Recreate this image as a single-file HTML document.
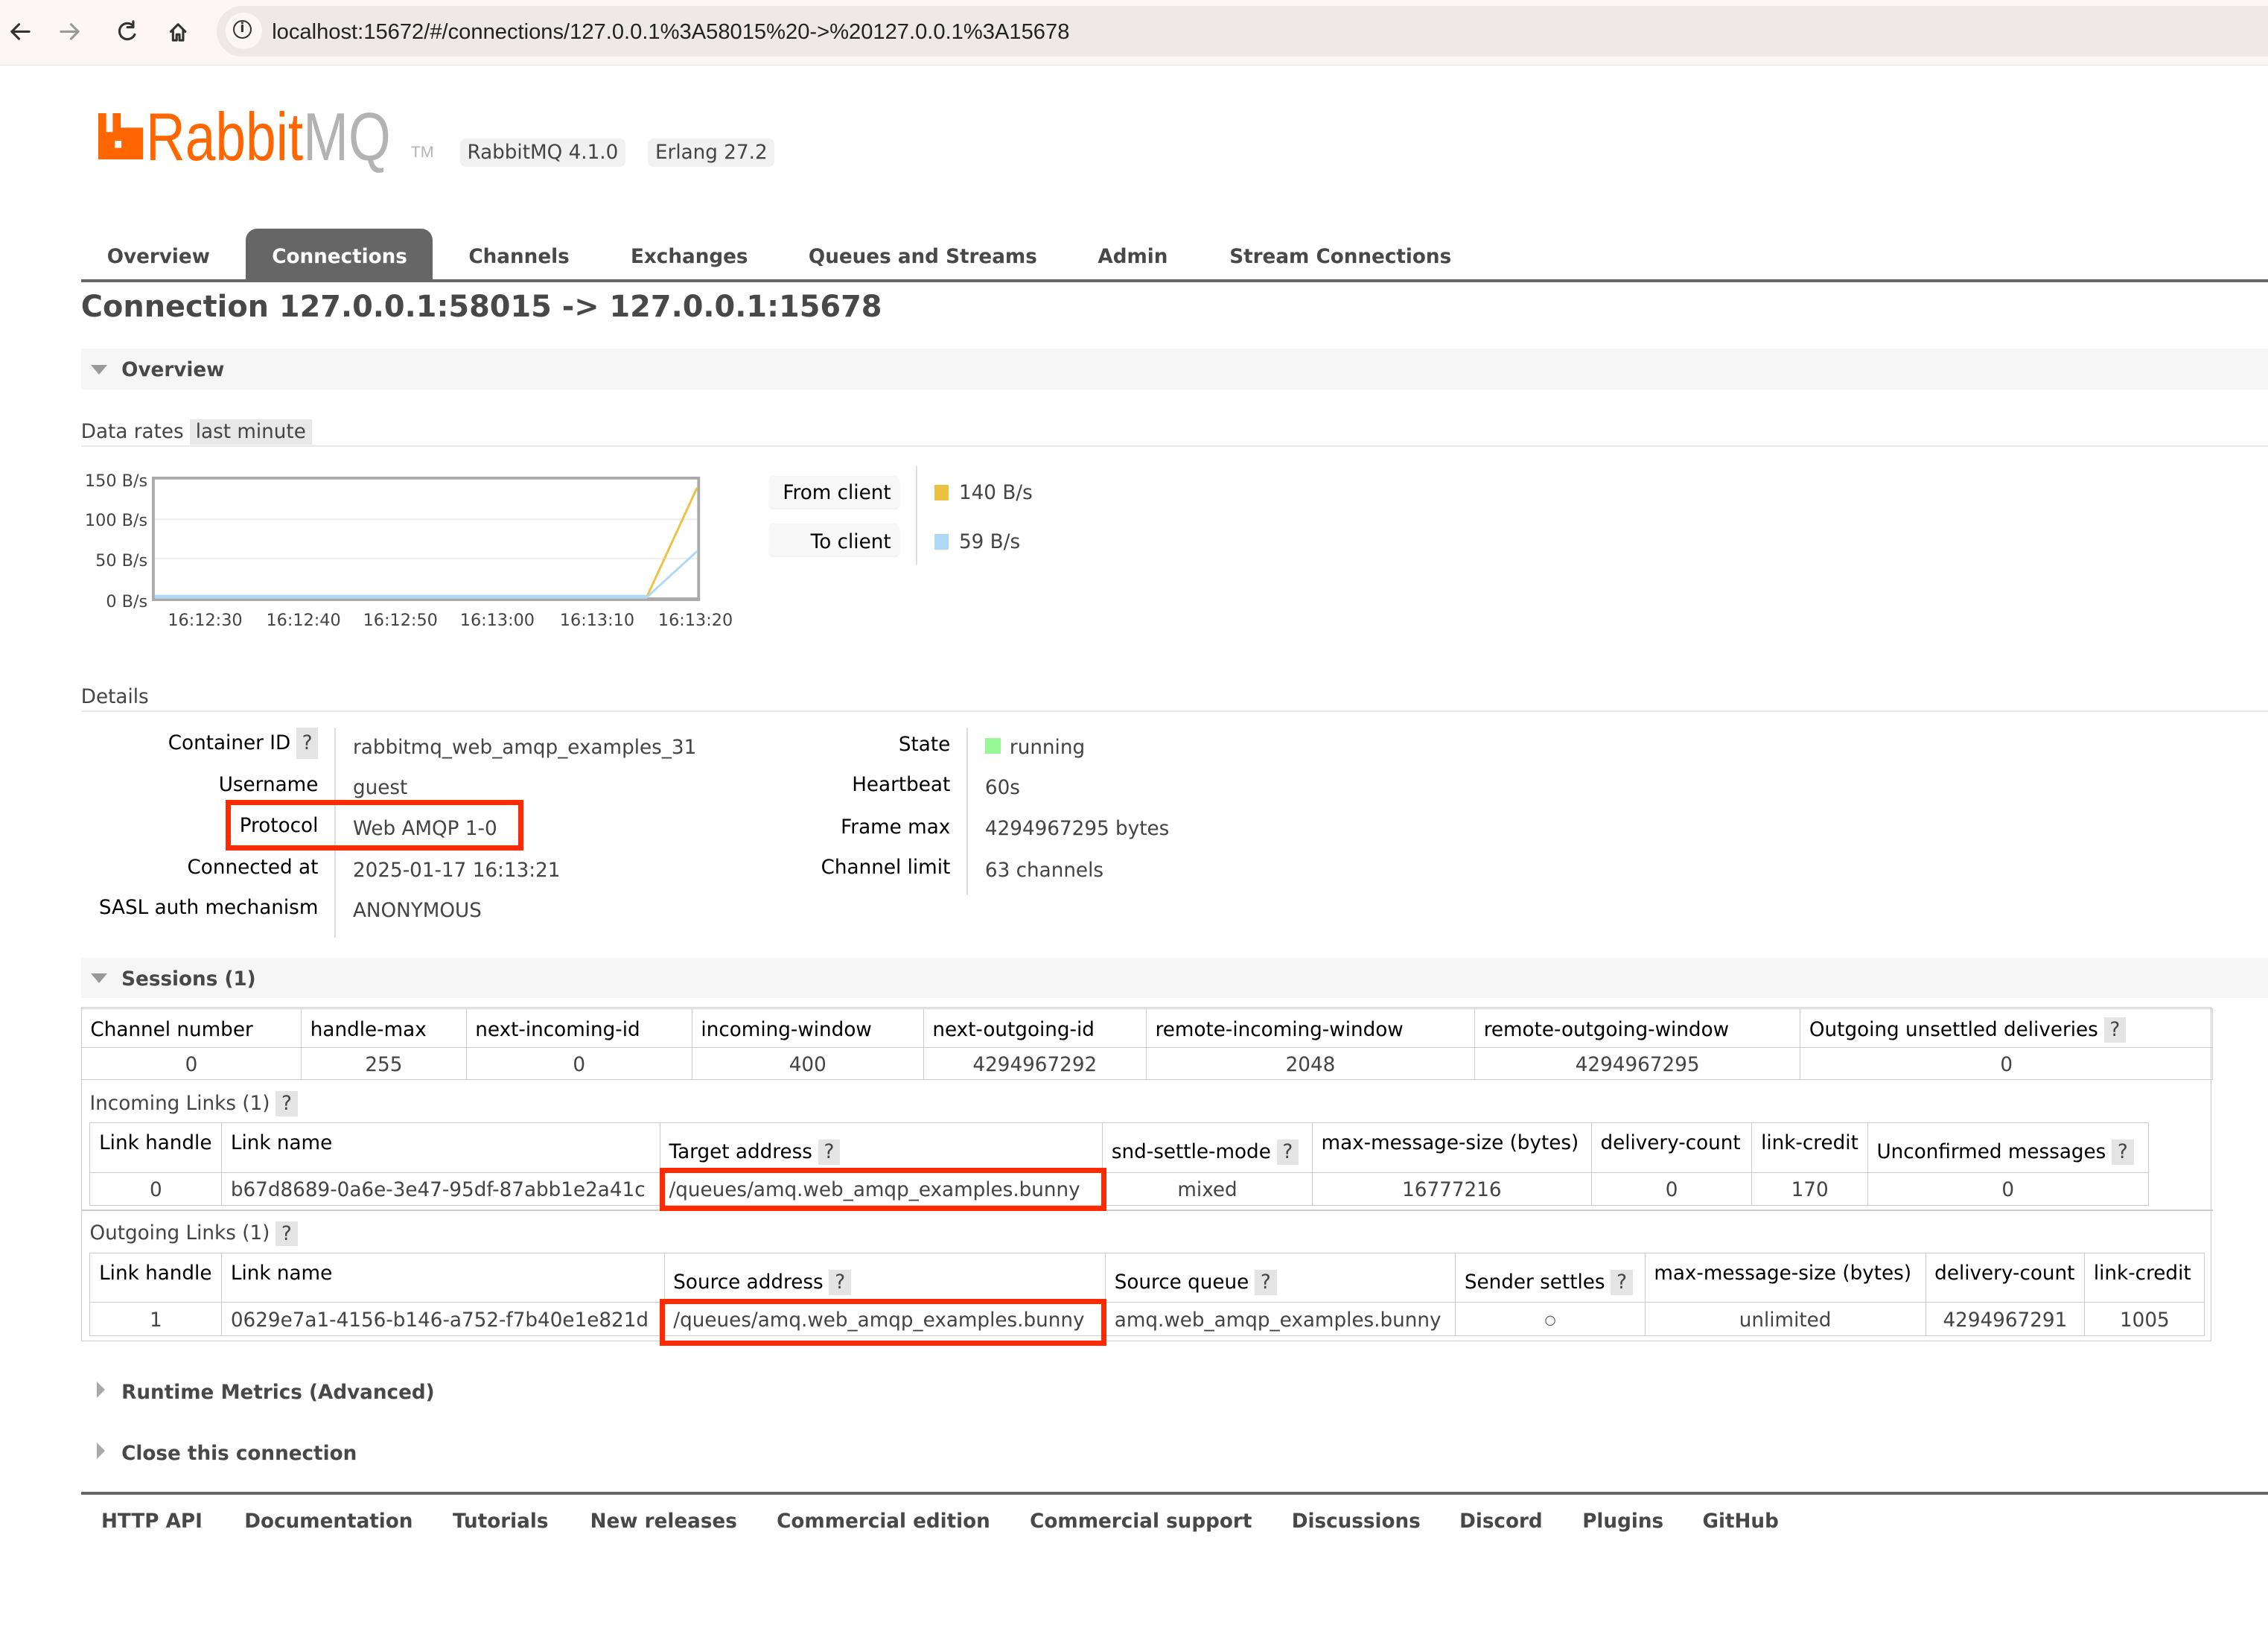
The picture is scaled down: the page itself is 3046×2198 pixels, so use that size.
<!DOCTYPE html>
<html><head><meta charset="utf-8">
<style>
html{zoom:1.9426}
body{margin:0;width:1568px;height:1131px;position:relative;overflow:hidden;background:#fff;font-family:"DejaVu Sans","Liberation Sans",sans-serif;font-size:13.5px;color:#444}
.a{position:absolute;white-space:nowrap}
.t{margin-top:1.5px}
.b{font-weight:bold}
.help{background:#e4e4e4;color:#444;padding:1px 4px;margin-left:4px}
table{position:absolute;border-collapse:collapse;table-layout:fixed;font-size:13.5px}
td{border:1px solid #ccc;padding:2px 6px 0;white-space:nowrap;overflow:hidden;color:#444}
th{border:1px solid #ccc;padding:2px 6px 0;white-space:nowrap;overflow:hidden;font-weight:normal;text-align:left;color:#000}
td{text-align:center}
.red{position:absolute;border:4px solid #ff2a00;box-sizing:border-box}
.sec{position:absolute;left:56px;width:1512px;height:28px;background:#f6f6f6}
.tri{position:absolute;width:0;height:0}
</style></head><body>
<!-- browser bar -->
<div class="a" style="left:0;top:0;width:1568px;height:45px;background:#fcf7f5;border-bottom:1px solid #e8e2e0"></div>
<svg class="a" style="left:4px;top:12px" width="140" height="20" viewBox="0 0 140 20" fill="none" stroke-width="1.6" stroke-linecap="round" stroke-linejoin="round">
<path d="M16 10H4M9 5L4 10L9 15" stroke="#333"/>
<path d="M38 10H50M45 5L50 10L45 15" stroke="#999"/>
<path d="M88 6A5.5 5.5 0 1 0 89 12M88 3V7H84" stroke="#333"/>
<path d="M114 10L119 5L124 10M115.5 9V16H118V12H120V16H122.5V9" stroke="#333"/>
</svg>
<div class="a" style="left:150px;top:4px;width:1418px;height:35px;background:#eee8e8;border-radius:18px 0 0 18px"></div>
<div class="a" style="left:156px;top:9px;width:25px;height:25px;border-radius:50%;background:#fcf7f5"></div>
<div class="a" style="left:161px;top:14px;width:13px;height:13px;border:1.5px solid #333;border-radius:50%;box-sizing:border-box;font-size:9px;line-height:10px;text-align:center;color:#333;font-weight:bold">i</div>
<div class="a" style="left:188px;top:14px;font-family:'Liberation Sans',sans-serif;font-size:15px;color:#222">localhost:15672/#/connections/127.0.0.1%3A58015%20-&gt;%20127.0.0.1%3A15678</div>

<!-- logo -->
<svg class="a" style="left:68px;top:78px" width="32" height="32" viewBox="0 0 32 32"><path d="M0 0H5.5V13H10V0H15.5V10H31V32H0Z" fill="#ff6600"/><rect x="11.5" y="19" width="4.5" height="5" fill="#fff"/></svg>
<div class="a" style="left:101px;top:69px;font-family:'Liberation Sans',sans-serif;font-size:47px;color:#ff6600;line-height:52px;transform:scaleX(0.8);transform-origin:0 0">Rabbit<span style="color:#b3b3b3">MQ</span></div>
<div class="a" style="left:284px;top:99px;font-family:'Liberation Sans',sans-serif;font-size:11px;color:#b3b3b3">TM</div>
<div class="a" style="left:318px;top:96px;padding:2px 5px;background:#f1f1f1;border-radius:4px;color:#444">RabbitMQ 4.1.0</div>
<div class="a" style="left:448px;top:96px;padding:2px 5px;background:#f1f1f1;border-radius:4px;color:#444">Erlang 27.2</div>

<!-- nav -->
<div class="a" style="left:56px;top:193px;width:1512px;height:2px;background:#666"></div>
<div class="a" style="left:170px;top:158px;width:129px;height:36px;background:#666;border-radius:8px 8px 0 0"></div>
<div class="a b" style="left:74px;top:170px;color:#484848">Overview</div>
<div class="a b" style="left:188px;top:170px;color:#fff">Connections</div>
<div class="a b" style="left:324px;top:170px;color:#484848">Channels</div>
<div class="a b" style="left:436px;top:170px;color:#484848">Exchanges</div>
<div class="a b" style="left:559px;top:170px;color:#484848">Queues and Streams</div>
<div class="a b" style="left:759px;top:170px;color:#484848">Admin</div>
<div class="a b" style="left:850px;top:170px;color:#484848">Stream Connections</div>

<div class="a b" style="left:56px;top:200px;font-size:20.5px;color:#484848">Connection 127.0.0.1:58015 -&gt; 127.0.0.1:15678</div>

<!-- overview section -->
<div class="sec" style="top:241px"></div>
<div class="tri" style="left:63px;top:252px;border-left:6px solid transparent;border-right:6px solid transparent;border-top:7px solid #999"></div>
<div class="a b" style="left:84px;top:248px;color:#484848">Overview</div>

<div class="a" style="left:56px;top:291px;color:#444">Data rates <span style="background:#e8e8e8;padding:1px 4px">last minute</span></div>
<div class="a" style="left:56px;top:308px;width:1512px;height:1px;background:#e8e8e8"></div>

<!-- chart -->
<div class="a" style="left:54px;top:326px;width:48px;text-align:right;font-size:11.5px;color:#444">150 B/s</div>
<div class="a" style="left:54px;top:353px;width:48px;text-align:right;font-size:11.5px;color:#444">100 B/s</div>
<div class="a" style="left:54px;top:381px;width:48px;text-align:right;font-size:11.5px;color:#444">50 B/s</div>
<div class="a" style="left:54px;top:409px;width:48px;text-align:right;font-size:11.5px;color:#444">0 B/s</div>
<svg class="a" style="left:105px;top:329px" width="380" height="90" viewBox="0 0 380 90">
<rect x="1" y="1.5" width="377" height="84" fill="#fff" stroke="#aaa" stroke-width="2"/>
<line x1="2" y1="30" x2="377" y2="30" stroke="#eee"/>
<line x1="2" y1="57" x2="377" y2="57" stroke="#eee"/>
<line x1="2" y1="85" x2="378" y2="85" stroke="#aaa" stroke-width="2"/>
<polyline points="2,84 342,84 377,8" fill="none" stroke="#edc240" stroke-width="1.5"/>
<polyline points="2,84 342,84 377,52" fill="none" stroke="#afd8f8" stroke-width="1.5"/>
<line x1="2" y1="83.5" x2="342" y2="83.5" stroke="#afd8f8" stroke-width="2.5"/>
</svg>
<div class="a" style="left:116px;top:422px;font-size:11.5px;color:#444">16:12:30</div>
<div class="a" style="left:184px;top:422px;font-size:11.5px;color:#444">16:12:40</div>
<div class="a" style="left:251px;top:422px;font-size:11.5px;color:#444">16:12:50</div>
<div class="a" style="left:318px;top:422px;font-size:11.5px;color:#444">16:13:00</div>
<div class="a" style="left:387px;top:422px;font-size:11.5px;color:#444">16:13:10</div>
<div class="a" style="left:455px;top:422px;font-size:11.5px;color:#444">16:13:20</div>

<div class="a" style="left:532px;top:329px;width:90px;height:22px;background:#f8f8f8;border-radius:3px;box-shadow:0 1px 1px #eee"></div>
<div class="a" style="left:532px;top:362px;width:90px;height:22px;background:#f8f8f8;border-radius:3px;box-shadow:0 1px 1px #eee"></div>
<div class="a" style="left:532px;top:333px;width:84px;text-align:right;color:#000">From client</div>
<div class="a" style="left:532px;top:367px;width:84px;text-align:right;color:#000">To client</div>
<div class="a" style="left:633px;top:322px;width:1px;height:68px;background:#ddd"></div>
<div class="a" style="left:646px;top:335px;width:10px;height:11px;background:#edc240"></div>
<div class="a" style="left:663px;top:333px">140 B/s</div>
<div class="a" style="left:646px;top:369px;width:10px;height:11px;background:#afd8f8"></div>
<div class="a" style="left:663px;top:367px">59 B/s</div>

<!-- details -->
<div class="a" style="left:56px;top:474px">Details</div>
<div class="a" style="left:56px;top:491px;width:1512px;height:1px;background:#e8e8e8"></div>
<div class="a" style="left:231px;top:503px;width:1px;height:145px;background:#ddd"></div>
<div class="a" style="left:668px;top:503px;width:1px;height:116px;background:#ddd"></div>
<div class="a" style="left:40px;top:506px;width:180px;text-align:right;color:#000">Container ID<span class="help" style="padding:3px 4px">?</span></div>
<div class="a" style="left:40px;top:535px;width:180px;text-align:right;color:#000">Username</div>
<div class="a" style="left:40px;top:563px;width:180px;text-align:right;color:#000">Protocol</div>
<div class="a" style="left:40px;top:592px;width:180px;text-align:right;color:#000">Connected at</div>
<div class="a" style="left:40px;top:620px;width:180px;text-align:right;color:#000">SASL auth mechanism</div>
<div class="a" style="left:244px;top:509px">rabbitmq_web_amqp_examples_31</div>
<div class="a" style="left:244px;top:537px">guest</div>
<div class="a" style="left:244px;top:565px">Web AMQP 1-0</div>
<div class="a" style="left:244px;top:594px">2025-01-17 16:13:21</div>
<div class="a" style="left:244px;top:622px">ANONYMOUS</div>
<div class="a" style="left:460px;top:507px;width:197px;text-align:right;color:#000">State</div>
<div class="a" style="left:460px;top:535px;width:197px;text-align:right;color:#000">Heartbeat</div>
<div class="a" style="left:460px;top:564px;width:197px;text-align:right;color:#000">Frame max</div>
<div class="a" style="left:460px;top:592px;width:197px;text-align:right;color:#000">Channel limit</div>
<div class="a" style="left:681px;top:510px;width:11px;height:11px;background:#98f898"></div>
<div class="a" style="left:698px;top:509px">running</div>
<div class="a" style="left:681px;top:537px">60s</div>
<div class="a" style="left:681px;top:565px">4294967295 bytes</div>
<div class="a" style="left:681px;top:594px">63 channels</div>
<div class="red" style="left:156px;top:553px;width:206px;height:35px"></div>

<!-- sessions -->
<div class="sec" style="top:662px"></div>
<div class="tri" style="left:63px;top:673px;border-left:6px solid transparent;border-right:6px solid transparent;border-top:7px solid #999"></div>
<div class="a b" style="left:84px;top:669px;color:#484848">Sessions (1)</div>

<div class="a" style="left:56px;top:696px;width:1472px;height:230px;border:1px solid #ccc"></div>
<table style="left:56px;top:697px;width:1474px">
<colgroup><col style="width:152px"><col style="width:114px"><col style="width:156px"><col style="width:160px"><col style="width:154px"><col style="width:227px"><col style="width:225px"><col style="width:285px"></colgroup>
<tr style="height:27px"><th>Channel number</th><th>handle-max</th><th>next-incoming-id</th><th>incoming-window</th><th>next-outgoing-id</th><th>remote-incoming-window</th><th>remote-outgoing-window</th><th>Outgoing unsettled deliveries<span class="help">?</span></th></tr>
<tr style="height:22px"><td>0</td><td>255</td><td>0</td><td>400</td><td>4294967292</td><td>2048</td><td>4294967295</td><td>0</td></tr>
</table>
<div class="a" style="left:62px;top:755px">Incoming Links (1)<span class="help">?</span></div>
<table style="left:62px;top:776px;width:1423px">
<colgroup><col style="width:91px"><col style="width:303px"><col style="width:306px"><col style="width:145px"><col style="width:193px"><col style="width:111px"><col style="width:80px"><col style="width:194px"></colgroup>
<tr style="height:34px"><th style="vertical-align:top;padding-top:6px">Link handle</th><th style="vertical-align:top;padding-top:6px">Link name</th><th style="padding-top:6px">Target address<span class="help">?</span></th><th style="padding-top:6px">snd-settle-mode<span class="help">?</span></th><th style="vertical-align:top;padding-top:6px">max-message-size (bytes)</th><th style="vertical-align:top;padding-top:6px">delivery-count</th><th style="vertical-align:top;padding-top:6px">link-credit</th><th style="padding-top:6px">Unconfirmed messages<span class="help">?</span></th></tr>
<tr style="height:23px"><td>0</td><td style="text-align:left">b67d8689-0a6e-3e47-95df-87abb1e2a41c</td><td style="text-align:left">/queues/amq.web_amqp_examples.bunny</td><td>mixed</td><td>16777216</td><td>0</td><td>170</td><td>0</td></tr>
</table>
<div class="a" style="left:56px;top:836px;width:1474px;height:1px;background:#ccc"></div>
<div class="a" style="left:62px;top:845px">Outgoing Links (1)<span class="help">?</span></div>
<table style="left:62px;top:866px;width:1462px">
<colgroup><col style="width:91px"><col style="width:306px"><col style="width:305px"><col style="width:242px"><col style="width:131px"><col style="width:194px"><col style="width:110px"><col style="width:83px"></colgroup>
<tr style="height:34px"><th style="vertical-align:top;padding-top:6px">Link handle</th><th style="vertical-align:top;padding-top:6px">Link name</th><th style="padding-top:6px">Source address<span class="help">?</span></th><th style="padding-top:6px">Source queue<span class="help">?</span></th><th style="padding-top:6px">Sender settles<span class="help">?</span></th><th style="vertical-align:top;padding-top:6px">max-message-size (bytes)</th><th style="vertical-align:top;padding-top:6px">delivery-count</th><th style="vertical-align:top;padding-top:6px">link-credit</th></tr>
<tr style="height:23px"><td>1</td><td style="text-align:left">0629e7a1-4156-b146-a752-f7b40e1e821d</td><td style="text-align:left">/queues/amq.web_amqp_examples.bunny</td><td style="text-align:left">amq.web_amqp_examples.bunny</td><td style="font-size:9px">○</td><td>unlimited</td><td>4294967291</td><td>1005</td></tr>
</table>
<div class="red" style="left:456px;top:807px;width:309px;height:30px"></div>
<div class="red" style="left:456px;top:898px;width:309px;height:32px"></div>

<!-- collapsed sections -->
<div class="tri" style="left:67px;top:955px;border-top:6px solid transparent;border-bottom:6px solid transparent;border-left:6px solid #aaa"></div>
<div class="a b" style="left:84px;top:955px;color:#484848">Runtime Metrics (Advanced)</div>
<div class="tri" style="left:67px;top:997px;border-top:6px solid transparent;border-bottom:6px solid transparent;border-left:6px solid #aaa"></div>
<div class="a b" style="left:84px;top:997px;color:#484848">Close this connection</div>

<!-- footer -->
<div class="a" style="left:56px;top:1031px;width:1512px;height:2px;background:#666"></div>
<div class="a b" style="left:70px;top:1044px;color:#484848">HTTP API</div>
<div class="a b" style="left:169px;top:1044px;color:#484848">Documentation</div>
<div class="a b" style="left:313px;top:1044px;color:#484848">Tutorials</div>
<div class="a b" style="left:408px;top:1044px;color:#484848">New releases</div>
<div class="a b" style="left:537px;top:1044px;color:#484848">Commercial edition</div>
<div class="a b" style="left:712px;top:1044px;color:#484848">Commercial support</div>
<div class="a b" style="left:893px;top:1044px;color:#484848">Discussions</div>
<div class="a b" style="left:1009px;top:1044px;color:#484848">Discord</div>
<div class="a b" style="left:1094px;top:1044px;color:#484848">Plugins</div>
<div class="a b" style="left:1177px;top:1044px;color:#484848">GitHub</div>
</body></html>
